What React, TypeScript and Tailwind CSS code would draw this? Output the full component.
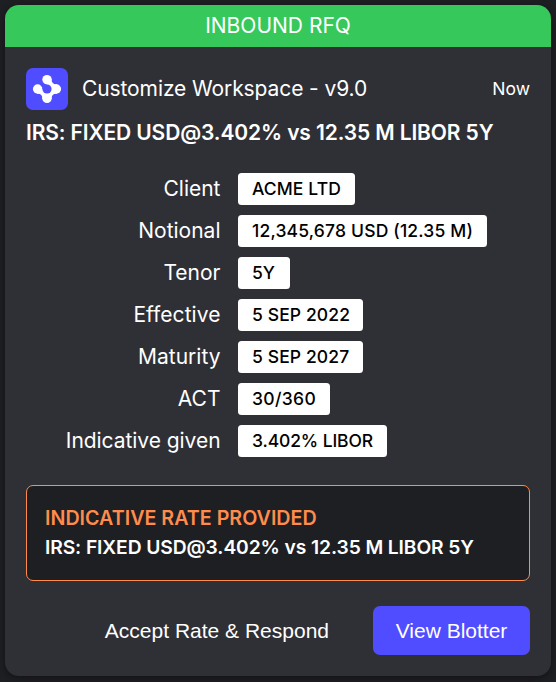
const details = [
  { label: 'Client', value: 'ACME LTD', labelSize: '', size: 'w-[117px] tracking-[0.1px]' },
  { label: 'Notional', value: '12,345,678 USD (12.35 M)', labelSize: '', size: 'w-[249px] tracking-[0.18px]' },
  { label: 'Tenor', value: '5Y', labelSize: '', size: 'w-[52px]' },
  { label: 'Effective', value: '5 SEP 2022', labelSize: 'tracking-[0.06px]', size: 'w-[125px] tracking-[0.12px]' },
  { label: 'Maturity', value: '5 SEP 2027', labelSize: '', size: 'w-[125px] tracking-[0.12px]' },
  { label: 'ACT', value: '30/360', labelSize: '', size: 'w-[92px] tracking-[0.35px]' },
  { label: 'Indicative given', value: '3.402% LIBOR', labelSize: 'tracking-[-0.05px]', size: 'w-[149px] tracking-[-0.12px]' },
];

function Logo() {
  return (
    <svg width="42" height="42" viewBox="0 0 42 42" className="shrink-0">
      <rect width="42" height="42" rx="7" fill="#504cff" />
      <g fill="#fff">
        <circle cx="21" cy="11.6" r="4.7" />
        <circle cx="11.6" cy="21" r="4.7" />
        <circle cx="30.4" cy="21" r="4.7" />
        <circle cx="21" cy="30.4" r="4.7" />
        <path d="M25.4 10.5 C25.2 14.2 27.7 16.6 31 16.3 L31 25.7 C27.5 25.4 25.4 27.2 25.6 31 L16.4 31 C16.6 27.2 14.6 25.4 11 25.7 L15.5 19 L21 21 L19.5 15.5 Z" />
      </g>
      <circle cx="21" cy="21" r="4.6" fill="#504cff" />
      <path d="M15.9 15.9 L21 16.4 L21 21 L16.4 21 Z" fill="#504cff" />
    </svg>
  );
}

export default function App() {
  return (
    <div className="h-[682px] w-[556px] overflow-hidden bg-[#1e1f23] p-[5px] font-['Inter',sans-serif] text-[21px] text-white">
      <section className="flex h-[671px] w-[546px] flex-col overflow-hidden rounded-[14px] bg-[#2f3036] shadow-[0_2px_7px_rgba(0,0,0,0.4)]">
        <header className="flex h-[42px] shrink-0 items-center justify-center bg-[#36c85b]">INBOUND RFQ</header>
        <div className="flex flex-col px-[21px] pt-[21px]">
          <div className="flex h-[42px] items-center">
            <Logo />
            <span className="ml-[14px] flex-1 tracking-[-0.1px]">Customize Workspace - v9.0</span>
            <span className="text-[17.5px]">Now</span>
          </div>
          <h1 className="mt-[7px] text-[21px] leading-[32px] font-semibold tracking-[-0.12px] whitespace-nowrap">IRS: FIXED USD@3.402% vs 12.35 M LIBOR 5Y</h1>
          <dl className="mt-[24px] flex flex-col gap-[10px]">
            {details.map(({ label, value, labelSize, size }) => (
              <div key={label} className="flex h-[32px] items-center gap-[17.5px]">
                <dt className={`w-[194.5px] text-right ${labelSize}`}>{label}</dt>
                <dd className={`flex h-[32px] items-center rounded-[3.5px] bg-white pl-[14px] text-[17.5px] font-medium whitespace-nowrap text-black ${size}`}>{value}</dd>
              </div>
            ))}
          </dl>
          <div className="mt-[28px] h-[96px] rounded-[7px] border border-[#ff8c4c] bg-[#1e1f23] px-[18px] pt-[17px] whitespace-nowrap">
            <p className="text-[19.7px] leading-[30px] font-semibold text-[#ff8c4c]">INDICATIVE RATE PROVIDED</p>
            <p className="text-[19.25px] leading-[29px] font-semibold tracking-[-0.1px]">IRS: FIXED USD@3.402% vs 12.35 M LIBOR 5Y</p>
          </div>
          <div className="mt-[25px] flex justify-end font-['Liberation_Sans',Arial,sans-serif] text-[21px]">
            <button className="mr-[22px] h-[49px] px-[22px]">Accept Rate &amp; Respond</button>
            <button className="h-[49px] w-[157px] rounded-[7px] bg-[#504cff]">View Blotter</button>
          </div>
        </div>
      </section>
    </div>
  );
}
